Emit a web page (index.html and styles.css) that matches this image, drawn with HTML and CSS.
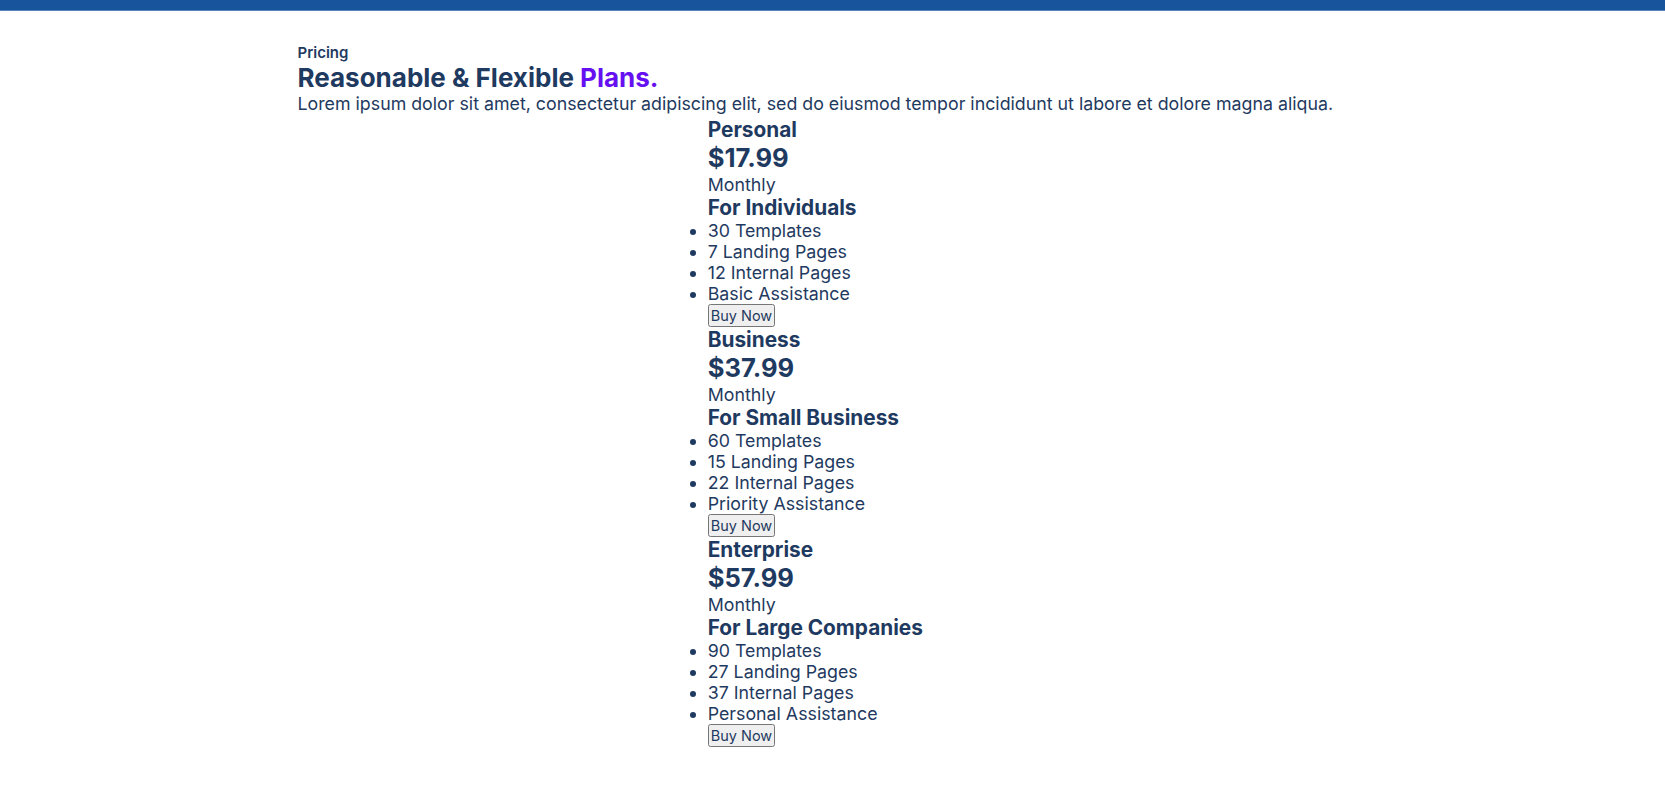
FILE: index.html
```html
<!DOCTYPE html>
<html lang="en">
<head>
<meta charset="utf-8">
<title>Pricing</title>
<link rel="stylesheet" href="styles.css">
</head>
<body>
<div class="topbar"></div>
<main class="page">
  <section class="pricing">
    <p class="eyebrow">Pricing</p>
    <h1 class="title">Reasonable &amp; Flexible <span class="accent">Plans.</span></h1>
    <p class="lead">Lorem ipsum dolor sit amet, consectetur adipiscing elit, sed do eiusmod tempor incididunt ut labore et dolore magna aliqua.</p>
    <div class="plans">
      <div class="plan">
        <h3 class="plan-name">Personal</h3>
        <p class="plan-price">$17.99</p>
        <p class="plan-period">Monthly</p>
        <h4 class="plan-for">For Individuals</h4>
        <ul class="features">
          <li>30 Templates</li>
          <li>7 Landing Pages</li>
          <li>12 Internal Pages</li>
          <li>Basic Assistance</li>
        </ul>
        <button class="buy">Buy Now</button>
      </div>
      <div class="plan">
        <h3 class="plan-name">Business</h3>
        <p class="plan-price">$37.99</p>
        <p class="plan-period">Monthly</p>
        <h4 class="plan-for">For Small Business</h4>
        <ul class="features">
          <li>60 Templates</li>
          <li>15 Landing Pages</li>
          <li>22 Internal Pages</li>
          <li>Priority Assistance</li>
        </ul>
        <button class="buy">Buy Now</button>
      </div>
      <div class="plan">
        <h3 class="plan-name">Enterprise</h3>
        <p class="plan-price">$57.99</p>
        <p class="plan-period">Monthly</p>
        <h4 class="plan-for">For Large Companies</h4>
        <ul class="features">
          <li>90 Templates</li>
          <li>27 Landing Pages</li>
          <li>37 Internal Pages</li>
          <li>Personal Assistance</li>
        </ul>
        <button class="buy">Buy Now</button>
      </div>
    </div>
  </section>
</main>
</body>
</html>
```

FILE: styles.css
```css
html, body {
  margin: 0;
  padding: 0;
  background: #ffffff;
}

body {
  font-family: Inter, "Noto Sans", sans-serif;
  color: #1f3a60;
}

.topbar {
  height: 10px;
  background: #17549c;
  border-bottom: 1px solid #5a86bd;
}

.page {
  max-width: 1070px;
  margin: 0 auto;
  padding-top: 31px;
}

.pricing {
  display: inline-flex;
  flex-direction: column;
}

.eyebrow {
  margin: 0;
  font-size: 15px;
  font-weight: 600;
}

.title {
  margin: 0;
  font-size: 26px;
  font-weight: 700;
}

.accent {
  color: #6610f2;
}

.lead {
  margin: 0 0 3px;
  font-size: 17.8px;
  font-weight: 400;
}

.plans {
  align-self: center;
  display: flex;
  flex-direction: column;
  align-items: flex-start;
}

.plan {
  display: flex;
  flex-direction: column;
  align-items: flex-start;
}

.plan-name {
  margin: 0;
  font-size: 20.8px;
  font-weight: 700;
}

.plan-price {
  margin: 0;
  font-size: 25.6px;
  font-weight: 700;
  line-height: 32px;
}

.plan-period {
  margin: 0;
  font-size: 17.8px;
}

.plan-for {
  margin: 0;
  font-size: 20.8px;
  font-weight: 700;
}

.features {
  margin: 0;
  padding: 0;
  font-size: 17.8px;
}

.buy {
  font-family: inherit;
  font-size: 14.5px;
  color: inherit;
  padding: 1px 1px;
}
```
